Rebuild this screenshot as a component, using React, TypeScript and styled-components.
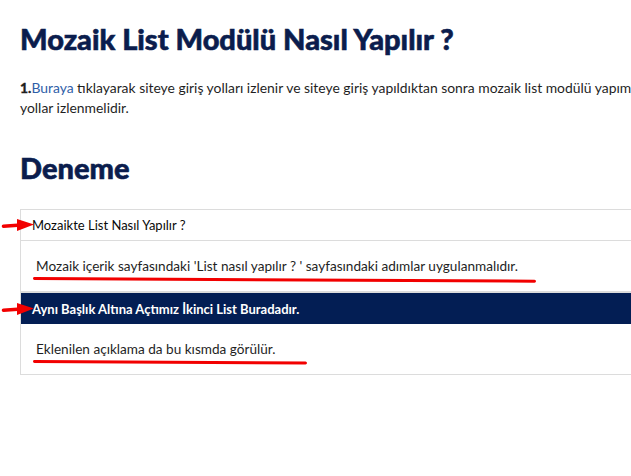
import React from "react";
import styled, { createGlobalStyle } from "styled-components";

const GlobalStyle = createGlobalStyle`
  html, body {
    margin: 0;
    padding: 0;
    background: #ffffff;
    overflow: hidden;
  }
  body {
    font-family: "Source Sans Pro", Lato, "Noto Sans", sans-serif;
    color: #1f1f1f;
  }
`;

const Page = styled.div`
  width: 760px;
  padding: 22px 0 0 20px;
  box-sizing: border-box;
`;

const Title = styled.h1`
  margin: 0;
  font-size: 29px;
  line-height: 34px;
  font-weight: 900;
  color: #0b1d4d;
  -webkit-text-stroke: 0.6px #0b1d4d;
`;

const Paragraph = styled.p`
  margin: 22px 0 0;
  font-size: 13.9px;
  line-height: 20px;
  color: #1f1f1f;
  white-space: nowrap;
`;

const Num = styled.b`
  font-weight: 900;
  -webkit-text-stroke: 0.3px #1f1f1f;
`;

const Link = styled.a`
  color: #2f5ea8;
  text-decoration: none;
`;

const Subtitle = styled.h2`
  margin: 32px 0 0;
  font-size: 29px;
  line-height: 36px;
  font-weight: 900;
  color: #0b1d4d;
  -webkit-text-stroke: 0.6px #0b1d4d;
`;

const Accordion = styled.div`
  margin-top: 23px;
  width: 720px;
  border: 1px solid #dcdcdc;
`;

const Header = styled.div<{ $active?: boolean }>`
  position: relative;
  display: flex;
  align-items: center;
  height: ${(p) => (p.$active ? "31px" : "30px")};
  padding-left: 11px;
  font-size: 13px;
  font-weight: ${(p) => (p.$active ? 700 : 400)};
  color: ${(p) => (p.$active ? "#ffffff" : "#0a0a0a")};
  background: ${(p) => (p.$active ? "#031e54" : "#ffffff")};
  border-bottom: ${(p) => (p.$active ? "none" : "1px solid #dcdcdc")};
`;

const Content = styled.div<{ $last?: boolean }>`
  display: flex;
  align-items: center;
  height: 50px;
  padding-left: 15px;
  font-size: 13.6px;
  color: #1f1f1f;
  border-bottom: ${(p) => (p.$last ? "none" : "2px solid #dcdcdc")};
`;

const Marked = styled.span<{ $extra: number }>`
  position: relative;
  &::after {
    content: "";
    position: absolute;
    left: -3px;
    right: ${(p) => -p.$extra}px;
    bottom: -6px;
    height: 3px;
    border-radius: 2px;
    background: #f20000;
    transform: rotate(0.3deg);
    transform-origin: left center;
  }
`;

const ArrowMark = styled.svg`
  position: absolute;
  left: -18px;
  top: 50%;
  margin-top: -6px;
  width: 31px;
  height: 12px;
  overflow: visible;
`;

const Arrow = () => (
  <ArrowMark viewBox="0 0 31 12">
    <path d="M0.5 7.2 L18 6" stroke="#f20000" strokeWidth="3.6" strokeLinecap="round" />
    <path d="M14 0 L31 5.6 L14 12 Z" fill="#f20000" />
  </ArrowMark>
);

export default function App() {
  return (
    <>
      <GlobalStyle />
      <Page>
        <Title>Mozaik List Modülü Nasıl Yapılır ?</Title>
        <Paragraph>
          <Num>1.</Num>
          <Link href="#">Buraya</Link> tıklayarak siteye giriş yolları izlenir ve siteye giriş
          yapıldıktan sonra mozaik list modülü yapım işlemleri için aşağıdaki
          <br />
          yollar izlenmelidir.
        </Paragraph>
        <Subtitle>Deneme</Subtitle>
        <Accordion>
          <Header>
            <Arrow />
            Mozaikte List Nasıl Yapılır ?
          </Header>
          <Content>
            <Marked $extra={18}>
              Mozaik içerik sayfasındaki 'List nasıl yapılır ? ' sayfasındaki adımlar uygulanmalıdır.
            </Marked>
          </Content>
          <Header $active>
            <Arrow />
            Aynı Başlık Altına Açtımız İkinci List Buradadır.
          </Header>
          <Content $last>
            <Marked $extra={32}>Eklenilen açıklama da bu kısmda görülür.</Marked>
          </Content>
        </Accordion>
      </Page>
    </>
  );
}
